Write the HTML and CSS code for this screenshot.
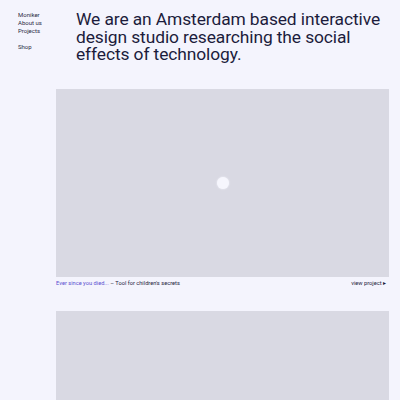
FILE: index.html
```html
<!DOCTYPE html>
<html>
<head>
<meta charset="utf-8">
<link rel="stylesheet" href="styles.css">
</head>
<body>
<div class="page">
  <nav class="nav">
    <a>Moniker</a>
    <a>About us</a>
    <a>Projects</a>
    <a class="gap">Shop</a>
  </nav>
  <main class="main">
    <h1 class="intro">We are an Amsterdam based interactive<br>design studio researching the social<br>effects of technology.</h1>
    <section class="project">
      <div class="media"><span class="dot"></span></div>
      <div class="caption">
        <span><span class="title">Ever since you died...</span> – Tool for children's secrets</span>
        <span class="view">view project ▸</span>
      </div>
    </section>
    <section class="project">
      <div class="media"></div>
    </section>
  </main>
</div>
</body>
</html>
```
FILE: styles.css
```css
html, body { margin: 0; padding: 0; }
body {
  background: #f4f4fd;
  color: #1c1c3c;
  font-family: Roboto, "Liberation Sans", sans-serif;
  overflow: hidden;
  height: 400px;
}
.page {
  display: flex;
  padding: 11px 11px 0 18px;
}
.nav {
  width: 38px;
  flex: none;
  display: flex;
  flex-direction: column;
  font-size: 6px;
  line-height: 8px;
  color: #2a2a44;
}
.nav .gap { margin-top: 8px; }
.main {
  flex: 1;
  min-width: 0;
  display: flex;
  flex-direction: column;
}
.intro {
  margin: 0 0 0 20px;
  font-weight: 400;
  font-size: 17.4px;
  line-height: 17.5px;
  letter-spacing: -0.1px;
  white-space: nowrap;
  color: #1c1c3c;
}
.project { margin-top: 25px; }
.project + .project { margin-top: 24px; }
.media {
  height: 188px;
  background: #d9d9e3;
  display: flex;
  align-items: center;
  justify-content: center;
}
.dot {
  width: 12px;
  height: 12px;
  border-radius: 50%;
  background: #f6f6fd;
  box-shadow: 0 0 2px #f6f6fd;
}
.caption {
  display: flex;
  justify-content: space-between;
  font-size: 5.7px;
  line-height: 8px;
  padding: 2px 3px 0 0;
  color: #1c1c3c;
}
.title { color: #5a4fd0; }
```
